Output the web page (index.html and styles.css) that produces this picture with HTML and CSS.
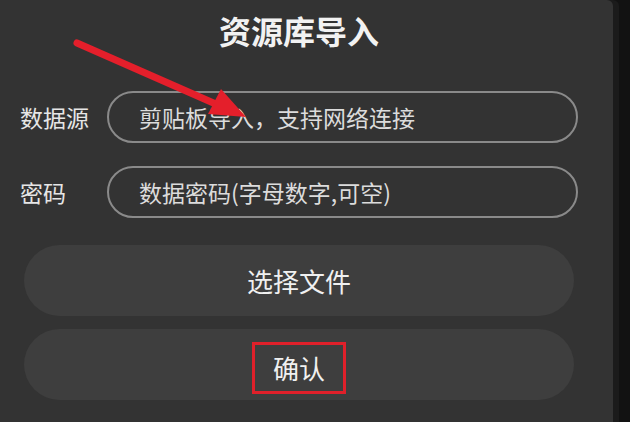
FILE: index.html
```html
<!DOCTYPE html>
<html lang="zh-CN">
  <head>
    <meta charset="UTF-8" />
    <meta name="viewport" content="width=device-width, initial-scale=1.0" />
    <title>资源库导入</title>
    <link rel="stylesheet" href="styles.css">
  </head>
  <body>
    <div class="dialog">
      <h1 class="title">资源库导入</h1>

      <div class="field">
        <label for="source">数据源</label>
        <input id="source" type="text" placeholder="剪贴板导入，支持网络连接" />
      </div>

      <div class="field">
        <label for="password">密码</label>
        <input id="password" type="text" placeholder="数据密码(字母数字,可空)" />
      </div>

      <button class="btn">选择文件</button>
      <button class="btn"><span class="mark">确认</span></button>

      <svg class="arrow" width="613" height="422" viewBox="0 0 613 422">
        <line x1="77" y1="43" x2="218" y2="105" stroke="#e41f2b" stroke-width="7" stroke-linecap="round" />
        <polygon points="246,117 208,114 221,89" fill="#e41f2b" />
      </svg>
    </div>
  </body>
</html>
```

FILE: styles.css
```css
body {
  margin: 0;
  padding: 0;
  background-color: #121212;
  font-family: "Noto Sans CJK SC", "Noto Sans", sans-serif;
  overflow: hidden;
}
.dialog {
  position: relative;
  width: 613px;
  height: 422px;
  box-sizing: border-box;
  padding: 12px 35px 0 20px;
  background-color: #333333;
  border-top-right-radius: 6px;
  box-shadow: 6px 0 0 #1b1b1b;
  display: flex;
  flex-direction: column;
}
.title {
  margin: 0 0 43px;
  text-align: center;
  color: #f2f2f2;
  font-size: 32px;
  font-weight: bold;
  line-height: 36px;
}
.field {
  display: flex;
  align-items: center;
  margin-bottom: 23px;
}
.field label {
  width: 87px;
  flex-shrink: 0;
  color: #e6e6e6;
  font-size: 23px;
}
.field input {
  flex: 1;
  height: 52px;
  box-sizing: border-box;
  padding: 0 0 0 30px;
  border: 2px solid #8a8a8a;
  border-radius: 26px;
  background: transparent;
  font-family: inherit;
  font-size: 23px;
  color: #e6e6e6;
  outline: none;
}
.field input::placeholder {
  color: #dcdcdc;
}
.btn {
  height: 71px;
  flex-shrink: 0;
  margin: 4px 4px 9px;
  border: none;
  border-radius: 36px;
  background-color: #3e3e3e;
  color: #f0f0f0;
  font-family: inherit;
  font-size: 26px;
  display: flex;
  align-items: center;
  justify-content: center;
}
.mark {
  margin-top: 7px;
  padding: 6px 18px;
  border: 3px solid #e0202a;
  line-height: 34px;
}
.arrow {
  position: absolute;
  left: 0;
  top: 0;
  pointer-events: none;
}
```
